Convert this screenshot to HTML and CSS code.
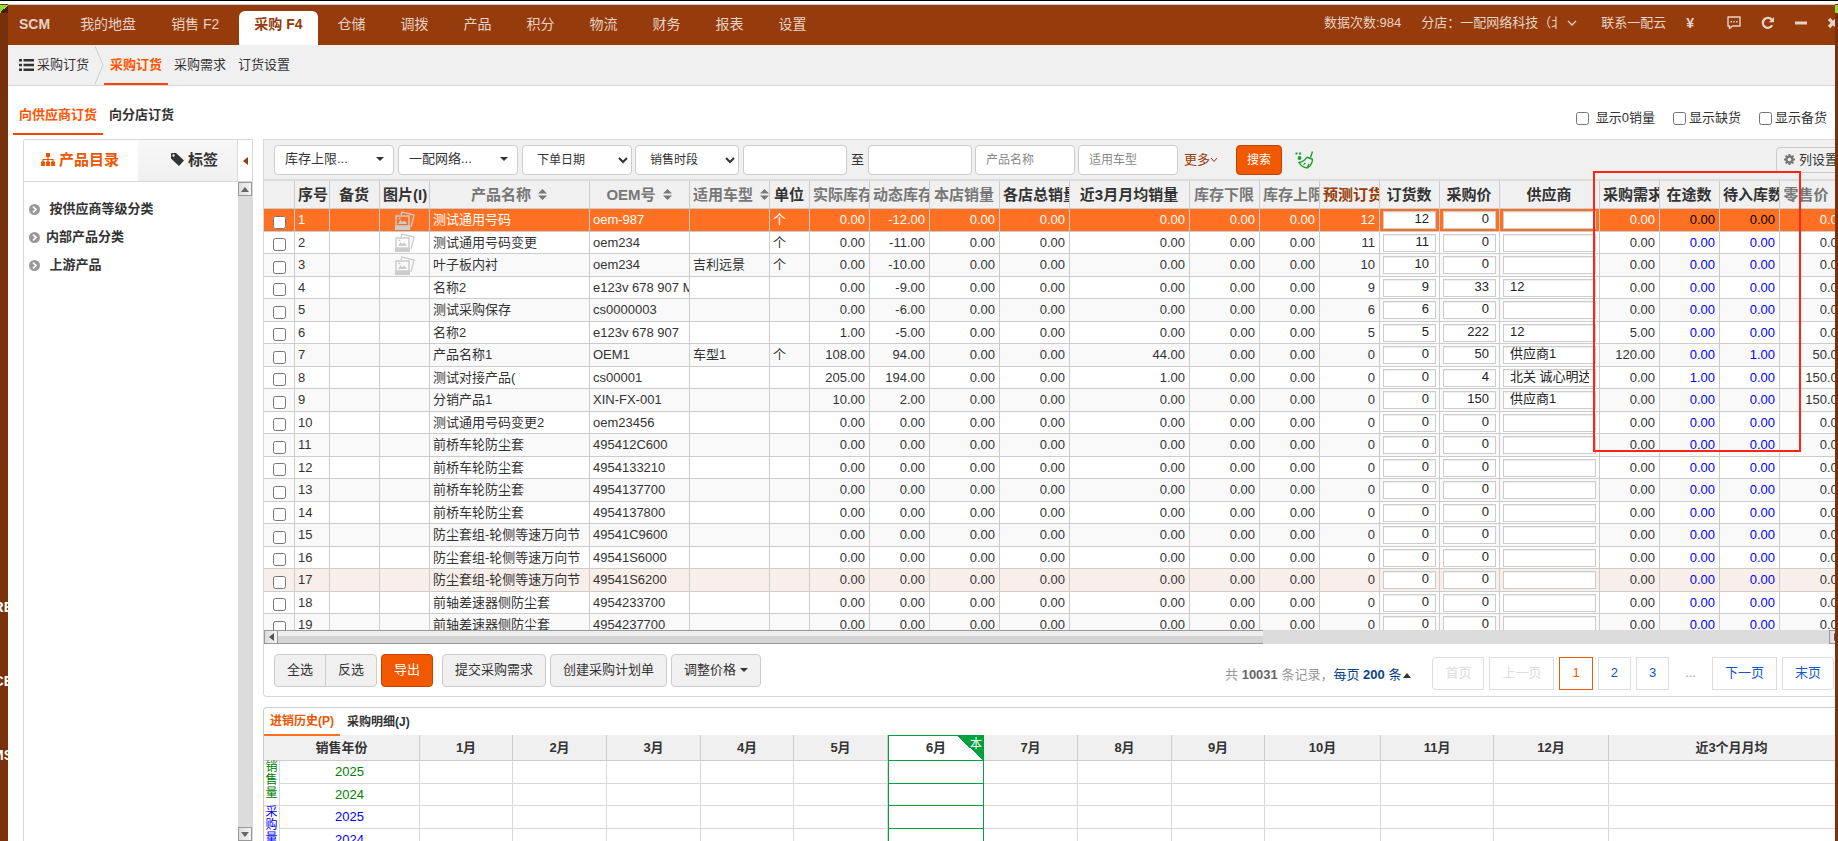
FILE: index.html
```html
<!DOCTYPE html>
<html lang="zh-CN">
<head>
  <meta charset="UTF-8">
  <meta name="viewport" content="width=device-width, initial-scale=1.0">
  <link rel="stylesheet" href="styles.css">
  <title>采购订货</title>
</head>
<body>

<div class="desk-icons">
  <span>CORE</span>
  <span>SCE</span>
  <span>CRMS</span>
</div>
<span class="desk-leaf left"></span>
<span class="desk-leaf right"></span>

<div class="window">
  <header class="topbar">
    <nav class="menu">
      <a href="#" class="brand">SCM</a>
      <a href="#">我的地盘</a>
      <a href="#">销售 F2</a>
      <a href="#" class="active">采购 F4</a>
      <a href="#">仓储</a>
      <a href="#">调拨</a>
      <a href="#">产品</a>
      <a href="#">积分</a>
      <a href="#">物流</a>
      <a href="#">财务</a>
      <a href="#">报表</a>
      <a href="#">设置</a>
    </nav>
    <div class="status">
      <span>数据次数:984</span>
      <button class="shop"><span class="shop-name">分店：一配网络科技（北京</span>
        <svg width="10" height="6" viewBox="0 0 10 6"><path d="M1 1l4 4 4-4" fill="none" stroke="currentColor" stroke-width="1.3"/></svg>
      </button>
      <a href="#">联系一配云</a>
      <b class="yen">¥</b>
      <div class="win-tools">
        <button aria-label="消息"><svg width="16" height="16" viewBox="0 0 16 16"><path d="M2 2h12v9H6.500l-3 2.500V11H2z" fill="none" stroke="currentColor" stroke-width="1.400" stroke-linejoin="round"/><path d="M4.500 6h1.500v1.500H4.500zM7.300 6h1.500v1.500H7.300zM10.100 6h1.500v1.500h-1.500z" fill="currentColor"/></svg></button>
        <button aria-label="刷新"><svg width="14" height="14" viewBox="0 0 14 14"><path d="M11.200 9.300A5 5 0 1 1 10.700 3.600" fill="none" stroke="currentColor" stroke-width="2.300"/><path d="M13 1v5.200H7.800z" fill="currentColor"/></svg></button>
        <button aria-label="最小化"><svg width="14" height="14" viewBox="0 0 14 14"><path d="M1 5.500h12v3H1z" fill="currentColor"/></svg></button>
        <button aria-label="关闭"><svg width="12" height="14" viewBox="0 0 12 14"><path d="M2 3l8 8M10 3l-8 8" stroke="currentColor" stroke-width="3.200"/></svg></button>
      </div>
    </div>
  </header>

  <nav class="subnav">
    <a href="#" class="crumb">
      <svg width="15" height="12" viewBox="0 0 15 12"><path d="M0 0h3v2.500H0zM0 4.700h3v2.500H0zM0 9.400h3v2.500H0zM4.500 0H15v2.500H4.500zM4.500 4.700H15v2.500H4.500zM4.500 9.400H15v2.500H4.500z" fill="#333"/></svg>
      采购订货
    </a>
    <svg class="crumb-arrow" width="10" height="38" viewBox="0 0 10 38"><path d="M1 0l8 19-8 19" fill="none" stroke="#ccc"/></svg>
    <a href="#" class="active">采购订货</a>
    <a href="#">采购需求</a>
    <a href="#">订货设置</a>
  </nav>

  <div class="page-tabs">
    <a href="#" class="active">向供应商订货</a>
    <a href="#">向分店订货</a>
    <div class="flags">
      <label class="wide"><input type="checkbox">显示0销量</label>
      <label><input type="checkbox">显示缺货</label>
      <label><input type="checkbox">显示备货</label>
    </div>
  </div>

  <div class="body">
    <aside class="side">
      <div class="side-tabs">
        <button class="active"><svg width="14" height="13" viewBox="0 0 14 13"><path d="M5 0h4v4H5zM0 8.500h4V13H0zM5 8.500h4V13H5zM10 8.500h4V13h-4z" fill="currentColor"/><path d="M7 4v5M2 9V6.500h10V9" fill="none" stroke="currentColor" stroke-width="1.200"/></svg>产品目录</button>
        <button><svg width="13" height="13" viewBox="0 0 13 13"><path fill-rule="evenodd" d="M0 1.200Q0 0 1.200 0H5L13 7.500 8 13 0 5.500zM1.300 2.500a1.200 1.200 0 1 0 2.400 0 1.200 1.200 0 1 0-2.400 0z" fill="currentColor"/></svg>标签</button>
        <button class="fold" aria-label="收起"><svg width="5" height="8" viewBox="0 0 5 8"><path d="M5 0v8L0 4z" fill="#963b0b"/></svg></button>
      </div>
      <div class="side-body">
        <ul class="tree">
          <li><svg width="11" height="11" viewBox="0 0 11 11"><circle cx="5.500" cy="5.500" r="5.500" fill="#999"/><path d="M4 2.700l3 2.800-3 2.800" fill="none" stroke="#fff" stroke-width="1.700"/></svg><a href="#">&nbsp;按供应商等级分类</a></li>
          <li><svg width="11" height="11" viewBox="0 0 11 11"><circle cx="5.500" cy="5.500" r="5.500" fill="#999"/><path d="M4 2.700l3 2.800-3 2.800" fill="none" stroke="#fff" stroke-width="1.700"/></svg><a href="#">内部产品分类</a></li>
          <li><svg width="11" height="11" viewBox="0 0 11 11"><circle cx="5.500" cy="5.500" r="5.500" fill="#999"/><path d="M4 2.700l3 2.800-3 2.800" fill="none" stroke="#fff" stroke-width="1.700"/></svg><a href="#">&nbsp;上游产品</a></li>
        </ul>
        <div class="vscroll"><i class="up"></i><i class="down"></i></div>
      </div>
    </aside>

    <main class="main">
      <section class="grid-panel">
        <form class="filters">
          <button type="button" class="combo">库存上限...<i class="caret"></i></button>
          <button type="button" class="combo">一配网络...<i class="caret"></i></button>
          <select aria-label="日期类型" class="date-type"><option>下单日期</option></select>
          <select aria-label="时段"><option>销售时段</option></select>
          <input type="text" aria-label="开始" class="date">
          <span class="to">至</span>
          <input type="text" aria-label="结束" class="date">
          <input type="text" aria-label="产品名称" placeholder="产品名称">
          <input type="text" aria-label="适用车型" placeholder="适用车型">
          <a href="#" class="more">更多<svg width="8" height="6" viewBox="0 0 8 6"><path d="M1 1l3 3.500L7 1" fill="none" stroke="currentColor"/></svg></a>
          <button type="button" class="primary search">搜索</button>
          <button type="button" class="broom" aria-label="清空"><svg width="20" height="18" viewBox="0 0 20 18" fill="none" stroke="#1f9d2b" stroke-width="1.400"><path d="M17.500 0.500L15.500 6.500M11.500 6l6.500 2.500M11.500 6.500C10 9.500 7.500 11 4 11.500c1.500 3 4.500 5 8.500 5.500 2.500-1.500 4.500-4.500 5-8M8.500 13.500l2-1.500M12.500 16l1.500-3"/><circle cx="4.500" cy="7" r="1.200" fill="#1f9d2b"/><path d="M0.500 2.500h2M4 2.500h2" stroke-width="2"/></svg></button>
          <button type="button" class="cols"><svg width="11" height="11" viewBox="0 0 11 11"><circle cx="5.500" cy="5.500" r="3" fill="none" stroke="#777" stroke-width="2.400"/><path d="M5.500 0v2M5.500 9v2M0 5.500h2M9 5.500h2M1.600 1.600L3 3M8 8l1.400 1.400M1.600 9.400L3 8M8 3l1.400-1.400" stroke="#777" stroke-width="2"/></svg>列设置</button>
        </form>

        <div class="grid-wrap">
          <table class="grid">
            <colgroup id="grid-cols"></colgroup>
            <thead><tr id="grid-head"></tr></thead>
            <tbody id="grid-rows"></tbody>
          </table>
        </div>
        <div class="hscroll"><i class="prev"></i><i class="thumb"></i><i class="next"></i></div>

        <div class="actions">
          <div class="group"><button>全选</button><button>反选</button></div>
          <button class="primary">导出</button>
          <button class="submit">提交采购需求</button>
          <button>创建采购计划单</button>
          <button class="price">调整价格<i class="caret"></i></button>
          <div class="total">共 <b>10031</b> 条记录，<a href="#">每页 <b>200</b> 条</a><i class="caret-up"></i></div>
          <nav class="pager">
            <a href="#" class="off first">首页</a>
            <a href="#" class="off">上一页</a>
            <a href="#" class="on">1</a>
            <a href="#">2</a>
            <a href="#">3</a>
            <span>...</span>
            <a href="#">下一页</a>
            <a href="#" class="last">末页</a>
          </nav>
        </div>
      </section>

      <section class="history">
        <div class="history-tabs">
          <a href="#" class="active">进销历史(P)</a>
          <a href="#">采购明细(J)</a>
        </div>
        <table class="months">
          <colgroup id="month-cols"></colgroup>
          <thead><tr id="month-head"></tr></thead>
          <tbody id="month-rows"></tbody>
        </table>
      </section>
    </main>
  </div>
</div>

<div class="mark"></div>

<script src="script.js"></script>
</body>
</html>
```
FILE: styles.css
```css
* {
  box-sizing: border-box;
}

body {
  position: relative;
  height: 100vh;
  margin: 0;
  padding: 4px 3px 0 8px;
  overflow: hidden;
  background: linear-gradient(#000 1px, #fff 1px, #fff 4px, #78300c 4px, #7c310c);
  color: #333;
  font: 13px/20px "Liberation Sans", "Noto Sans CJK SC", sans-serif;
}

a {
  color: inherit;
  text-decoration: none;
}

button, input, select {
  font: inherit;
  color: inherit;
}

button {
  padding: 0;
  border: 0;
  background: none;
}

ul {
  margin: 0;
  padding: 0;
  list-style: none;
}

i {
  flex: none;
}

svg {
  flex: none;
}

/* desktop behind the window */
.desk-icons {
  position: absolute;
  top: 597px;
  left: 0;
  width: 8px;
  display: flex;
  flex-direction: column;
  align-items: flex-end;
  gap: 54px;
  overflow: hidden;
  color: #fff;
  font-size: 14px;
  font-weight: bold;
}

.desk-icons span {
  margin-right: -5px;
}

.desk-leaf {
  position: absolute;
  top: 5px;
  width: 8px;
  height: 8px;
  background: linear-gradient(135deg, #8be030 50%, #4a1d06 50%);
}

.desk-leaf.left { left: 0; }
.desk-leaf.right { right: 0; width: 3px; background: #8be030; }

.window {
  display: flex;
  flex-direction: column;
  height: 100%;
  overflow: hidden;
  background: #fff;
}

/* top bar */
.topbar {
  display: flex;
  flex: none;
  align-items: flex-end;
  height: 41px;
  border-top: 1px solid #ccc;
  background: #963b0b;
  color: #e6d3c8;
}

.menu {
  display: flex;
  gap: 5px;
  margin-left: -4px;
}

.menu a {
  height: 34px;
  padding: 0 15px;
  font-size: 14px;
  line-height: 27px;
  white-space: nowrap;
}

.menu .brand {
  padding-right: 10px;
  font-weight: bold;
}

.menu .active {
  border-radius: 6px 6px 0 0;
  background: #fff;
  color: #963b0b;
  font-weight: bold;
}

.status {
  display: flex;
  align-items: center;
  height: 40px;
  margin-left: auto;
  margin-bottom: 2px;
  white-space: nowrap;
}

.shop {
  display: flex;
  align-items: center;
  gap: 10px;
  margin: 0 24px 0 20px;
}

.shop-name {
  width: 136px;
  overflow: hidden;
  text-align: left;
}

.yen {
  margin-left: 20px;
  font-size: 14px;
}

.win-tools {
  display: flex;
  align-items: center;
  gap: 19px;
  margin: 0 -4px 0 32px;
}

.win-tools button {
  display: flex;
}

/* second level */
.subnav {
  display: flex;
  flex: none;
  align-items: center;
  height: 41px;
  border-bottom: 1px solid #d8d8d8;
  background: #f0f0f0;
}

.subnav a {
  height: 40px;
  line-height: 40px;
  padding: 0 6px;
}

.subnav .crumb {
  display: flex;
  align-items: center;
  gap: 3px;
  padding: 0 5px 0 11px;
}

.subnav .active {
  border-bottom: 2px solid #ff4400;
  color: #ff5500;
  font-weight: bold;
}

.page-tabs {
  display: flex;
  flex: none;
  height: 49px;
  padding-left: 5px;
  font-weight: bold;
}

.page-tabs > a {
  height: 49px;
  padding: 19px 6px 0;
}

.page-tabs .active {
  border-bottom: 2px solid #ff4400;
  color: #ff5500;
}

.flags {
  display: flex;
  align-items: flex-start;
  gap: 18px;
  margin-left: auto;
  padding: 22px 8px 0 0;
  font-weight: normal;
}

.flags label {
  display: flex;
  align-items: center;
  gap: 3px;
}

.flags .wide {
  gap: 7px;
}

.flags input, .grid input[type=checkbox] {
  width: 13px;
  height: 13px;
  margin: 0;
}

.body {
  display: flex;
  flex: 1;
  min-height: 0;
  padding-left: 15px;
  padding-top: 4px;
}

/* catalog panel */
.side {
  display: flex;
  flex: none;
  flex-direction: column;
  width: 230px;
  margin-right: 10px;
  border: 1px solid #d8d8d8;
  border-bottom: 0;
  border-radius: 3px 0 0 0;
}

.side-tabs {
  display: flex;
  height: 42px;
  border-bottom: 1px solid #d8d8d8;
}

.side-tabs button {
  display: flex;
  flex: 1;
  align-items: center;
  justify-content: flex-end;
  gap: 4px;
  padding: 0 19px 2px 0;
  background: linear-gradient(#f8f8f8, #f0f0f0);
  font-size: 15px;
  font-weight: bold;
}

.side-tabs .active {
  flex: none;
  width: 114px;
  background: #fff;
  color: #f05500;
}

.side-tabs .fold {
  flex: none;
  justify-content: center;
  width: 15px;
  padding: 0;
  border-left: 1px solid #d8d8d8;
  background: #fff;
}

.side-body {
  display: flex;
  flex: 1;
  min-height: 0;
}

.tree {
  flex: 1;
  padding: 13px 5px;
  font-weight: bold;
}

.tree li {
  display: flex;
  align-items: center;
  gap: 6px;
  height: 28px;
}

.vscroll {
  display: flex;
  flex-direction: column;
  justify-content: space-between;
  width: 14px;
  background: #dcdcdc;
}

.vscroll i, .hscroll .prev, .hscroll .next {
  display: flex;
  align-items: center;
  justify-content: center;
  width: 14px;
  height: 14px;
  border: 1px solid #999;
  background: linear-gradient(90deg, #ddd, #f4f4f4);
}

.vscroll .up::after, .caret-up {
  border: 4px solid transparent;
  border-top: 0;
  border-bottom: 5px solid #666;
  content: "";
}

.vscroll .down::after {
  border: 4px solid transparent;
  border-bottom: 0;
  border-top: 5px solid #666;
  content: "";
}

.hscroll .prev::after {
  border: 4px solid transparent;
  border-left: 0;
  border-right: 5px solid #555;
  content: "";
}

.hscroll .next::after {
  border: 4px solid transparent;
  border-right: 0;
  border-left: 5px solid #555;
  content: "";
}

/* main column */
.main {
  display: flex;
  flex: 1;
  flex-direction: column;
  min-width: 0;
}

.grid-panel {
  display: flex;
  flex: 1;
  flex-direction: column;
  min-height: 0;
  margin-bottom: 10px;
  border: 1px solid #d8d8d8;
  border-right: 0;
  border-radius: 0 0 0 4px;
}

.filters {
  display: flex;
  flex: none;
  align-items: center;
  height: 41px;
  padding-left: 10px;
  border-bottom: 2px solid #dcdcdc;
  background: #f0f0f0;
  font-size: 12px;
  white-space: nowrap;
}

.filters input, .filters select, .combo {
  height: 30px;
  margin-right: 3px;
  border: 1px solid #ccc;
  border-radius: 4px;
  background: #fff;
}

.filters input {
  width: 100px;
  padding: 0 10px;
}

.filters .date {
  width: 104px;
}

.filters input::placeholder {
  color: #888;
}

.filters select {
  width: 104px;
  margin-right: 4px;
  padding: 0 0 0 10px;
}

.filters .date-type {
  width: 110px;
}

.combo {
  display: flex;
  align-items: center;
  justify-content: space-between;
  width: 120px;
  padding: 0 9px 2px 10px;
  font-size: 13px;
}

.filters .combo {
  margin-right: 4px;
}

.filters .combo + select {
  margin-right: 3px;
}

.caret {
  border: 4px solid transparent;
  border-bottom: 0;
  border-top-color: #333;
}

.to {
  margin: 0 4px 0 1px;
  font-size: 13px;
}

.more {
  display: flex;
  align-items: center;
  margin: 0 18px 0 3px;
  color: #963b0b;
  font-size: 13px;
}

.primary, .actions .primary {
  border: 1px solid #c24400;
  border-radius: 4px;
  background: #f25800;
  color: #fff;
}

.search {
  width: 46px;
  height: 30px;
}

.broom {
  display: flex;
  margin-left: 13px;
}

.cols {
  display: flex;
  align-items: center;
  gap: 4px;
  height: 26px;
  margin: 0 -11px 0 auto;
  padding: 0 7px;
  border: 1px solid #ccc;
  border-radius: 4px;
  font-size: 13px;
}

.grid-wrap {
  flex: 1;
  min-height: 0;
  overflow: hidden;
}

.grid {
  width: 1586px;
  table-layout: fixed;
  border-spacing: 0;
}

.grid th, .grid td {
  padding: 0 4px 0 3px;
  overflow: hidden;
  border-right: 1px solid #ccc;
  border-bottom: 1px solid #ccc;
  white-space: nowrap;
}

.grid th {
  height: 28px;
  background: #f0f0f0;
  font-size: 15px;
  line-height: 24px;
}

.grid th.gray {
  color: #777;
}

.grid th.brown {
  color: #963b0b;
}

.grid th svg {
  margin-left: 7px;
}

.grid td {
  height: 22px;
  text-align: right;
  line-height: 20px;
}

.grid tr:nth-child(odd) td {
  height: 23px;
  background: #f9f9f9;
}

.grid tr:nth-child(even) td {
  background: #fff;
}

.grid tbody tr.hover td {
  background: #f8eeea;
}

.grid tbody tr.selected td {
  background: #ff7022;
  color: #fff;
}

.grid td.left {
  text-align: left;
}

.grid td.center {
  padding: 0;
  text-align: center;
}

.grid td.center > * {
  display: block;
  margin: 0 auto;
}

.grid td.center input[type=checkbox] {
  position: relative;
  top: 2px;
}

.grid td.transit {
  color: #00f;
}

.grid tbody tr.selected td.transit {
  color: #000;
}

.grid td.edit {
  padding: 0 3px;
}

.grid td.edit input {
  display: block;
  width: 100%;
  height: 18px;
  padding: 0 6px 2px;
  border: 1px solid #ccc;
  background: #fff;
  box-shadow: inset 0 1px 1px #eee;
  color: #222;
  text-align: right;
}

.grid td.edit.left input {
  text-align: left;
}

.hscroll {
  display: flex;
  flex: none;
  height: 14px;
  background: #dcdcdc;
}

.hscroll .thumb {
  width: calc(63% - 5px);
  border: 1px solid #999;
  border-width: 1px 0;
  background: linear-gradient(#eee 45%, #d4d4d4 45%);
}

.hscroll .next {
  margin: 0 -8px 0 auto;
}

.actions {
  display: flex;
  flex: none;
  align-items: flex-start;
  height: 52px;
  padding: 10px 1px 0 10px;
  white-space: nowrap;
}

.actions button {
  height: 33px;
  margin-right: 4px;
  padding: 0 12px 2px;
  border: 1px solid #ccc;
  border-radius: 4px;
  background: #f0f0f0;
}

.actions .submit {
  margin-left: 5px;
}

.group {
  display: flex;
}

.actions .group button {
  margin-right: 0;
  border-radius: 4px 0 0 4px;
}

.actions .group button + button {
  margin: 0 4px 0 -1px;
  border-radius: 0 4px 4px 0;
}

.price {
  display: flex;
  align-items: center;
  gap: 4px;
}

.total {
  display: flex;
  align-items: center;
  margin: 11px 21px 0 auto;
  color: #999;
  white-space: pre;
}

.total b {
  color: #666;
}

.total a, .total a b {
  color: #0a3f86;
}

.caret-up {
  margin-left: 2px;
  border-bottom-color: #333;
}

.pager {
  display: flex;
  gap: 5px;
  margin-top: 3px;
}

.pager a, .pager span {
  height: 33px;
  padding: 0 12px;
  border: 1px solid #ddd;
  color: #1155cc;
  line-height: 29px;
}

.pager span {
  border-color: transparent;
  color: #999;
  padding: 0 10px;
}

.pager .off {
  color: #ddd;
}

.pager .on {
  border-color: #f25800;
  color: #f25800;
}

.pager .first {
  border-radius: 4px 0 0 4px;
}

.pager .last {
  border-radius: 0 4px 4px 0;
}

/* history panel */
.history {
  flex: none;
  height: 134px;
  overflow: hidden;
  border: 1px solid #ccc;
  border-width: 1px 0 0 1px;
  border-radius: 4px 0 0 0;
}

.history-tabs {
  display: flex;
  gap: 1px;
  font-size: 12px;
  font-weight: bold;
}

.history-tabs a {
  height: 28px;
  padding: 0 6px;
  line-height: 28px;
}

.history-tabs .active {
  border-bottom: 2px solid #ff7022;
  color: #f05500;
  line-height: 26px;
}

.months {
  width: calc(100% + 20px);
  margin-top: -1px;
  table-layout: fixed;
  border-spacing: 0;
}

.months th, .months td {
  height: 23px;
  padding: 0;
  border-right: 1px solid #d8d8d8;
  border-bottom: 1px solid #d8d8d8;
  text-align: center;
}

.months th {
  height: 26px;
  border-color: #ccc;
  background: #f0f0f0;
}

.months tr:nth-child(even) td {
  height: 22px;
}

.months td.kind {
  font-size: 12px;
  line-height: 13px;
  vertical-align: top;
}

.months tr.sale td {
  color: #008000;
}

.months tr.buy td {
  color: #00f;
}

.months .current {
  position: relative;
  border-color: #00a03c;
  border-left: 1px solid #00a03c;
}

.months th.current {
  border-top: 1px solid #00a03c;
  background: #fff;
}

.months th.current span {
  position: absolute;
  top: 0;
  right: 0;
  width: 26px;
  height: 24px;
  padding-left: 12px;
  background: linear-gradient(to top right, transparent 50%, #00a03c 50%);
  color: #fff;
  font-size: 12px;
  font-weight: normal;
  line-height: 16px;
}

/* highlight frame over the grid */
.mark {
  position: absolute;
  top: 171px;
  right: 37px;
  width: 208px;
  height: 281px;
  border: 2px solid #ff2414;
  pointer-events: none;
}
```
FILE: script.js
```js
// title, width, header style, sortable
const columns = [
  ['', 31], ['序号', 35], ['备货', 50], ['图片(I)', 50],
  ['产品名称', 160, 'gray', true], ['OEM号', 100, 'gray', true], ['适用车型', 80, 'gray', true],
  ['单位', 40], ['实际库存', 60, 'gray'], ['动态库存', 60, 'gray'], ['本店销量', 70, 'gray'],
  ['各店总销量', 70], ['近3月月均销量', 120], ['库存下限', 70, 'gray'], ['库存上限', 60, 'gray'],
  ['预测订货', 60, 'brown'], ['订货数', 60], ['采购价', 60], ['供应商', 100],
  ['采购需求', 60], ['在途数', 60], ['待入库数', 60], ['零售价', 70, 'gray', true]
];

const sortIcon = '<svg width="9" height="11" viewBox="0 0 9 11"><path d="M4.500 0L9 4.500H0zM4.500 11L0 6.500h9z" fill="#777"/></svg>';
const photoIcon = '<svg width="20" height="19" viewBox="0 0 20 19"><path d="M6 4L7 1l12 3-3 12" fill="none" stroke="#ccc" stroke-width="1.300"/><path d="M1 5h13v10H1z" fill="none" stroke="#ccc" stroke-width="1.500"/><path d="M0 15h15v4H0zM3 13l2.500-4 2 2 2-1.500L12 13z" fill="#ccc"/><circle cx="4.500" cy="7.500" r="1" fill="#ccc"/></svg>';

// name, oem, car, unit, stock, dynamic, month average, order, price, supplier, demand, transit, inbound, retail
const rows = [
  ['测试通用号码', 'oem-987', '', '个', '0.00', '-12.00', '0.00', 12, 0, '', '0.00', '0.00', '0.00', '0.00'],
  ['测试通用号码变更', 'oem234', '', '个', '0.00', '-11.00', '0.00', 11, 0, '', '0.00', '0.00', '0.00', '0.00'],
  ['叶子板内衬', 'oem234', '吉利远景', '个', '0.00', '-10.00', '0.00', 10, 0, '', '0.00', '0.00', '0.00', '0.00'],
  ['名称2', 'e123v 678 907 M', '', '', '0.00', '-9.00', '0.00', 9, 33, '12', '0.00', '0.00', '0.00', '0.00'],
  ['测试采购保存', 'cs0000003', '', '', '0.00', '-6.00', '0.00', 6, 0, '', '0.00', '0.00', '0.00', '0.00'],
  ['名称2', 'e123v 678 907', '', '', '1.00', '-5.00', '0.00', 5, 222, '12', '5.00', '0.00', '0.00', '0.00'],
  ['产品名称1', 'OEM1', '车型1', '个', '108.00', '94.00', '44.00', 0, 50, '供应商1', '120.00', '0.00', '1.00', '50.00'],
  ['测试对接产品(', 'cs00001', '', '', '205.00', '194.00', '1.00', 0, 4, '北关 诚心明达', '0.00', '1.00', '0.00', '150.00'],
  ['分销产品1', 'XIN-FX-001', '', '', '10.00', '2.00', '0.00', 0, 150, '供应商1', '0.00', '0.00', '0.00', '150.00']
];

[
  ['测试通用号码变更2', 'oem23456'], ['前桥车轮防尘套', '495412C600'], ['前桥车轮防尘套', '4954133210'],
  ['前桥车轮防尘套', '4954137700'], ['前桥车轮防尘套', '4954137800'], ['防尘套组-轮侧等速万向节', '49541C9600'],
  ['防尘套组-轮侧等速万向节', '49541S6000'], ['防尘套组-轮侧等速万向节', '49541S6200'],
  ['前轴差速器侧防尘套', '4954233700'], ['前轴差速器侧防尘套', '4954237700']
].forEach(function (p) {
  rows.push([p[0], p[1], '', '', '0.00', '0.00', '0.00', 0, 0, '', '0.00', '0.00', '0.00', '0.00']);
});

function fill(id, html) {
  document.getElementById(id).innerHTML = html;
}

function cell(value, cls) {
  return '<td class="' + (cls || '') + '">' + value + '</td>';
}

function edit(label, value, cls) {
  return cell('<input type="text" aria-label="' + label + '" value="' + value + '">', 'edit ' + (cls || ''));
}

fill('grid-cols', columns.map(c => '<col style="width:' + c[1] + 'px">').join(''));
fill('grid-head', columns.map(c => '<th class="' + (c[2] || '') + '">' + c[0] + (c[3] ? sortIcon : '') + '</th>').join(''));

fill('grid-rows', rows.map(function (r, i) {
  const cls = i === 0 ? 'selected' : i === 16 ? 'hover' : '';
  return '<tr class="' + cls + '">' +
    cell('<input type="checkbox" aria-label="选择' + (i + 1) + '">', 'center') +
    cell(i + 1, 'left') + cell('') + cell(i < 3 ? photoIcon : '', 'center') +
    cell(r[0], 'left') + cell(r[1], 'left') + cell(r[2], 'left') + cell(r[3], 'left') +
    cell(r[4]) + cell(r[5]) + cell('0.00') + cell('0.00') + cell(r[6]) +
    cell('0.00') + cell('0.00') + cell(r[7]) +
    edit('订货数', r[7]) + edit('采购价', r[8]) + edit('供应商', r[9], 'left') +
    cell(r[10]) + cell(r[11], 'transit') + cell(r[12], 'transit') + cell(r[13]) +
    '</tr>';
}).join(''));

const monthWidths = [16, 140, 93, 94, 94, 93, 94, 96, 94, 94, 93, 116, 113, 115];
const current = 6;

fill('month-cols', monthWidths.map(w => '<col style="width:' + w + 'px">').join('') + '<col>');

let head = '<th colspan="2">销售年份</th>';
let blanks = '';
for (let m = 1; m <= 12; m++) {
  const cls = m === current ? ' class="current"' : '';
  head += '<th' + cls + '>' + m + '月' + (m === current ? '<span>本</span>' : '') + '</th>';
  blanks += '<td' + cls + '></td>';
}
fill('month-head', head + '<th>近3个月月均</th>');
blanks += '<td></td>';

fill('month-rows', [['sale', '销<br>售<br>量'], ['buy', '采<br>购<br>量']].map(k =>
  '<tr class="' + k[0] + '"><td class="kind" rowspan="2">' + k[1] + '</td><td>2025</td>' + blanks + '</tr>' +
  '<tr class="' + k[0] + '"><td>2024</td>' + blanks + '</tr>'
).join(''));
```
